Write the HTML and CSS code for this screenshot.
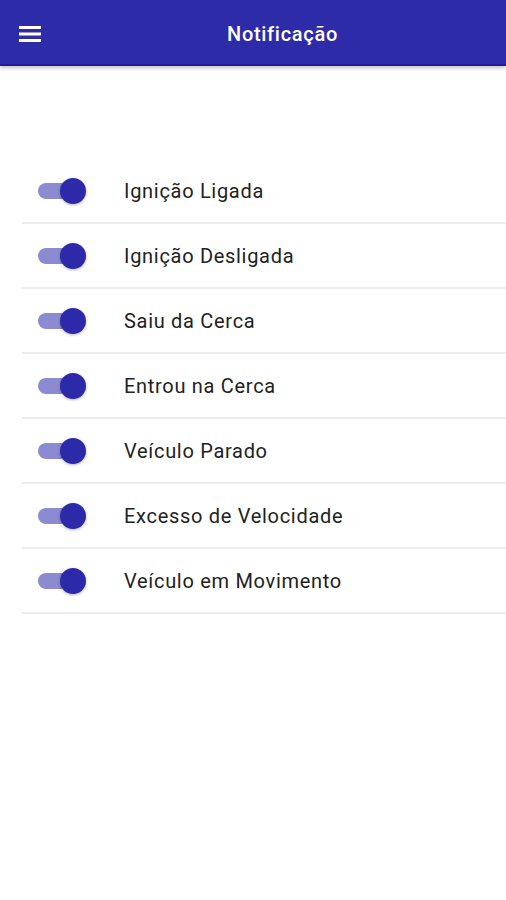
FILE: index.html
```html
<!DOCTYPE html>
<html lang="pt">
<head>
    <meta charset="UTF-8">
    <meta name="viewport" content="width=device-width, initial-scale=1.0">
    <title>Notificação</title>
    <link rel="stylesheet" href="styles.css">
</head>
<body>

<header class="topbar">
    <button class="menu-btn" aria-label="Menu">
        <svg width="22" height="16" viewBox="0 0 22 16">
            <rect x="0" y="0" width="22" height="3" fill="#fff"/>
            <rect x="0" y="6.5" width="22" height="3" fill="#fff"/>
            <rect x="0" y="13" width="22" height="3" fill="#fff"/>
        </svg>
    </button>
    <h1 class="title">Notificação</h1>
</header>

<ul class="list">
    <li class="item"><span class="switch"><span class="thumb"></span></span><span class="label">Ignição Ligada</span></li>
    <li class="item"><span class="switch"><span class="thumb"></span></span><span class="label">Ignição Desligada</span></li>
    <li class="item"><span class="switch"><span class="thumb"></span></span><span class="label">Saiu da Cerca</span></li>
    <li class="item"><span class="switch"><span class="thumb"></span></span><span class="label">Entrou na Cerca</span></li>
    <li class="item"><span class="switch"><span class="thumb"></span></span><span class="label">Veículo Parado</span></li>
    <li class="item"><span class="switch"><span class="thumb"></span></span><span class="label">Excesso de Velocidade</span></li>
    <li class="item"><span class="switch"><span class="thumb"></span></span><span class="label">Veículo em Movimento</span></li>
</ul>

</body>
</html>
```

FILE: styles.css
```css
body {
    margin: 0;
    font-family: Roboto, "Noto Sans", sans-serif;
    background-color: #fff;
}
.topbar {
    height: 64px;
    background-color: #2e2ba9;
    border-bottom: 2px solid #1f1ca0;
    box-shadow: 0 2px 4px rgba(0, 0, 0, 0.25);
    display: flex;
    align-items: center;
    position: relative;
}
.menu-btn {
    background: none;
    border: none;
    padding: 0;
    margin-left: 19px;
    width: 22px;
    height: 16px;
    display: flex;
    margin-top: 4px;
}
.title {
    margin: 3px 0 0 186px;
    color: #fff;
    font-size: 20px;
    font-weight: 500;
    letter-spacing: 0.7px;
}
.list {
    list-style: none;
    margin: 93px 0 0 22px;
    padding: 0;
}
.item {
    height: 63px;
    border-bottom: 2px solid #ececec;
    display: flex;
    align-items: center;
}
.switch {
    width: 40px;
    height: 16px;
    margin-left: 16px;
    border-radius: 8px;
    background-color: #8c8bd2;
    position: relative;
    flex-shrink: 0;
}
.thumb {
    position: absolute;
    width: 26px;
    height: 26px;
    border-radius: 50%;
    background-color: #2d2aaa;
    top: -5px;
    right: -8px;
    box-shadow: 0 1px 3px rgba(0, 0, 0, 0.3);
}
.label {
    margin-left: 46px;
    font-size: 20px;
    letter-spacing: 0.7px;
    color: #222;
}
```
